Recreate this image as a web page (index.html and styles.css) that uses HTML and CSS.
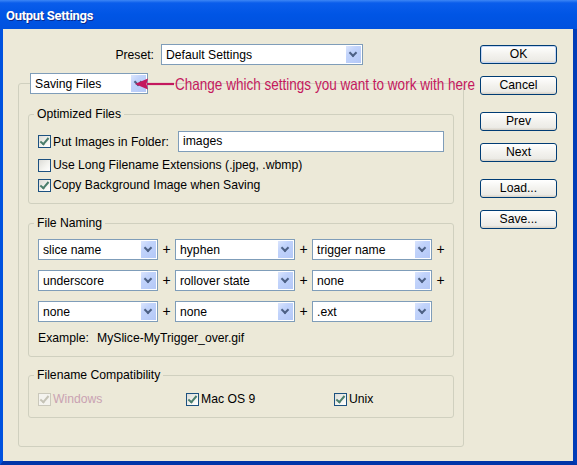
FILE: index.html
```html
<!DOCTYPE html>
<html lang="en">
<head>
  <meta charset="utf-8" />
  <title>Output Settings</title>
  <link rel="stylesheet" href="styles.css">
</head>
<body>
  <div class="window">
    <div class="titlebar">Output Settings</div>
    <div class="client">
      <div class="main">
        <div class="preset-row">
          <label class="preset-label">Preset:</label>
          <div class="combo combo-preset"><span>Default Settings</span><i class="drop"></i></div>
        </div>

        <div class="panel">
          <div class="combo combo-section"><span>Saving Files</span><i class="drop"></i></div>

          <div class="callout">
            <svg width="40" height="14" viewBox="0 0 40 14">
              <path d="M0 7 L13 1.5 L11.5 7 L13 12.5 Z" fill="#c4185e" />
              <path d="M12 7 H39" stroke="#c4185e" stroke-width="2.2" />
            </svg>
            <span class="callout-text">Change which settings you want to work with here</span>
          </div>

          <div class="group group-optimized">
            <div class="group-title">Optimized Files</div>
            <div class="folder-row">
              <span class="cb on"></span>
              <span class="folder-label">Put Images in Folder:</span>
              <div class="text-field">images</div>
            </div>
            <div class="check-row">
              <span class="cb"></span>
              <span>Use Long Filename Extensions (.jpeg, .wbmp)</span>
            </div>
            <div class="check-row">
              <span class="cb on"></span>
              <span>Copy Background Image when Saving</span>
            </div>
          </div>

          <div class="group group-naming">
            <div class="group-title">File Naming</div>
            <div class="naming-grid">
              <div class="combo"><span>slice name</span><i class="drop"></i></div>
              <span class="plus">+</span>
              <div class="combo"><span>hyphen</span><i class="drop"></i></div>
              <span class="plus">+</span>
              <div class="combo"><span>trigger name</span><i class="drop"></i></div>
              <span class="plus">+</span>

              <div class="combo"><span>underscore</span><i class="drop"></i></div>
              <span class="plus">+</span>
              <div class="combo"><span>rollover state</span><i class="drop"></i></div>
              <span class="plus">+</span>
              <div class="combo"><span>none</span><i class="drop"></i></div>
              <span class="plus">+</span>

              <div class="combo"><span>none</span><i class="drop"></i></div>
              <span class="plus">+</span>
              <div class="combo"><span>none</span><i class="drop"></i></div>
              <span class="plus">+</span>
              <div class="combo"><span>.ext</span><i class="drop"></i></div>
              <span class="plus"></span>
            </div>
            <div class="example"><span class="example-label">Example:</span><span>MySlice-MyTrigger_over.gif</span></div>
          </div>

          <div class="group group-compat">
            <div class="group-title">Filename Compatibility</div>
            <div class="compat-row">
              <div class="check-row disabled"><span class="cb on"></span><span>Windows</span></div>
              <div class="check-row"><span class="cb on"></span><span>Mac OS 9</span></div>
              <div class="check-row"><span class="cb on"></span><span>Unix</span></div>
            </div>
          </div>
        </div>
      </div>

      <div class="buttons">
        <div class="btn-pair">
          <button class="btn btn-default">OK</button>
          <button class="btn">Cancel</button>
        </div>
        <div class="btn-pair">
          <button class="btn">Prev</button>
          <button class="btn">Next</button>
        </div>
        <div class="btn-pair">
          <button class="btn">Load...</button>
          <button class="btn">Save...</button>
        </div>
      </div>
    </div>
  </div>
</body>
</html>
```

FILE: styles.css
```css
* {
  box-sizing: border-box;
}
body {
  margin: 0;
  padding: 0;
  background-color: #0055e5;
  font-family: 'Liberation Sans', Arial, sans-serif;
  font-size: 12.2px;
  color: #000;
}
.window {
  width: 577px;
  height: 465px;
  display: flex;
  flex-direction: column;
  overflow: hidden;
}
.titlebar {
  height: 29px;
  padding: 2px 0 0 6px;
  line-height: 27px;
  background: linear-gradient(to bottom, #3d86f5 0, #0a5deb 3px, #0055e5 50%, #0051de 100%);
  color: #fff;
  font-family: Roboto, 'Liberation Sans', sans-serif;
  font-weight: bold;
  font-size: 13px;
  letter-spacing: -0.3px;
  text-shadow: 1px 1px 0 #0a2a8c;
}
.client {
  flex: 1;
  display: flex;
  background-color: #ece9d8;
  border-left: 3px solid #0052df;
  border-right: 4px solid #003cb8;
  border-bottom: 4px solid #0035a8;
}
.main {
  width: 461px;
  padding-left: 15px;
}
.preset-row {
  display: flex;
  align-items: center;
  margin-top: 15px;
}
.preset-label {
  width: 136px;
  margin-right: 7px;
  text-align: right;
}

/* XP style combo box */
.combo {
  display: flex;
  align-items: center;
  height: 21px;
  padding: 1px 1px 1px 4px;
  border: 1px solid #7f9db9;
  background-color: #fff;
  white-space: nowrap;
}
.combo span {
  flex: 1;
}
.drop {
  position: relative;
  width: 15px;
  height: 17px;
  background: linear-gradient(135deg, #dbe5fd 0, #c1d3fb 35%, #b4c8f7 100%);
}
.drop::after {
  content: '';
  position: absolute;
  left: 4px;
  top: 4px;
  width: 4px;
  height: 4px;
  border-right: 2px solid #4d6185;
  border-bottom: 2px solid #4d6185;
  transform: rotate(45deg);
}
.combo-preset {
  width: 202px;
}
.combo-section {
  width: 118px;
  margin: -11px 0 0 2px;
}

.panel {
  position: relative;
  width: 446px;
  margin-top: 18px;
  padding: 0 9px 28px 9px;
  border: 1px solid #d0d0bf;
  border-radius: 3px;
}
.callout {
  position: absolute;
  left: 116px;
  top: -9px;
  height: 18px;
  display: flex;
  align-items: center;
  color: #c4185e;
  font-family: 'Liberation Sans', sans-serif;
  font-size: 16.5px;
  line-height: 18px;
  white-space: nowrap;
}
.callout svg {
  display: block;
  flex: none;
}
.callout-text {
  display: inline-block;
  transform: scaleX(0.82);
  transform-origin: left center;
}

.group {
  border: 1px solid #d0d0bf;
  border-radius: 3px;
  padding: 0 9px 11px 9px;
}
.group-title {
  display: table;
  margin: -7px 0 0 -4px;
  padding: 0 3px;
  line-height: 13px;
  background-color: #ece9d8;
}
.group-optimized {
  margin-top: 20px;
}
.group-naming {
  margin-top: 19px;
}
.group-compat {
  margin-top: 18px;
}

/* checkboxes */
.cb {
  position: relative;
  flex: none;
  width: 13px;
  height: 13px;
  margin-right: 2px;
  border: 1px solid #1c5180;
  background: linear-gradient(135deg, #dcdcd7 0, #f4f4f0 60%, #ffffff 100%);
}
.cb.on::after {
  content: '';
  position: absolute;
  left: 3px;
  top: 0px;
  width: 3px;
  height: 7px;
  border-right: 2px solid #4a7e6c;
  border-bottom: 2px solid #4a7e6c;
  transform: rotate(40deg);
}
.check-row {
  display: flex;
  align-items: center;
  height: 13px;
  line-height: 13px;
  margin-top: 7px;
  white-space: nowrap;
}
.check-row.disabled {
  color: #c9a2b2;
}
.check-row.disabled .cb {
  border-color: #cac8bb;
  background: #f4f3ee;
}
.check-row.disabled .cb.on::after {
  border-color: #c5c3b6;
}

.folder-row {
  display: flex;
  align-items: center;
  height: 21px;
  margin-top: 10px;
}
.folder-label {
  width: 125px;
}
.text-field {
  flex: 1;
  height: 21px;
  padding: 0 4px;
  line-height: 19px;
  border: 1px solid #7f9db9;
  background-color: #fff;
}

.naming-grid {
  display: grid;
  grid-template-columns: 120px 17px 120px 17px 120px 17px;
  grid-auto-rows: 21px;
  row-gap: 10px;
  margin-top: 9px;
}
.plus {
  text-align: center;
  line-height: 21px;
  font-size: 14px;
}
.example {
  margin-top: 10px;
  line-height: 13px;
}
.example-label {
  display: inline-block;
  width: 59px;
}

.compat-row {
  display: grid;
  grid-template-columns: 148px 148px auto;
  margin-top: 11px;
}
.compat-row .check-row {
  margin-top: 0;
}

.buttons {
  margin-left: 16px;
  padding-top: 16px;
}
.btn-pair {
  display: flex;
  flex-direction: column;
  gap: 12px;
  margin-bottom: 17px;
}
.btn {
  width: 77px;
  height: 19px;
  padding: 0;
  border: 1px solid #003c74;
  border-radius: 3px;
  background: linear-gradient(to bottom, #ffffff 0, #f3f2ee 50%, #ecebe6 85%, #d6d0c5 100%);
  font-family: 'Liberation Sans', Arial, sans-serif;
  font-size: 12.2px;
  font-weight: normal;
  color: #000;
  line-height: 17px;
}
.btn-default {
  box-shadow: inset 0 0 0 1px #c4d6f5;
}
```
